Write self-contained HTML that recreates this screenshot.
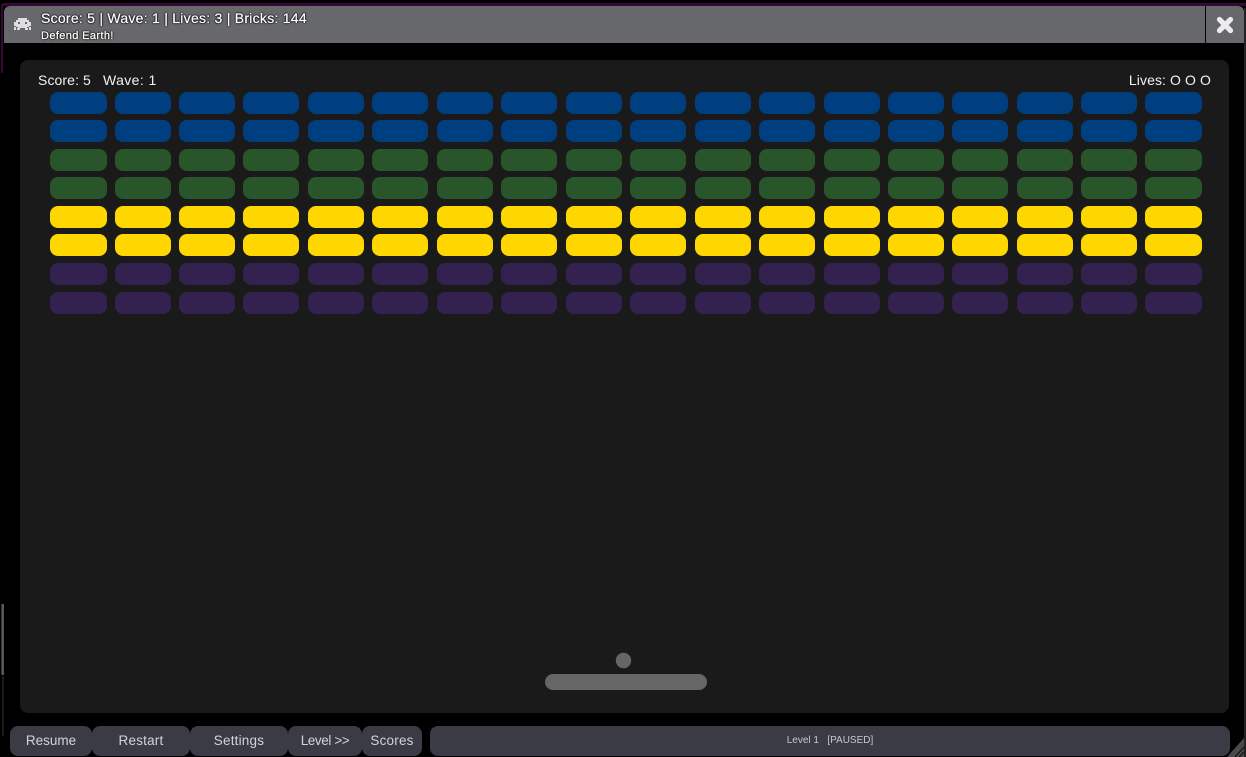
<!DOCTYPE html>
<html>
<head>
<meta charset="utf-8">
<style>
html,body{margin:0;padding:0;background:#000;}
body{position:relative;width:1246px;height:757px;overflow:hidden;font-family:"Liberation Sans",sans-serif;color:#fff;}
.abs{position:absolute;}
.t{position:absolute;white-space:nowrap;line-height:1;}
.btn{position:absolute;top:726px;height:30px;background:#3a3b44;border-radius:8px;color:#d4d4d6;font-size:13.5px;line-height:29px;text-align:center;letter-spacing:.2px;}
.sh{text-shadow:-1px 0 1px #222,1px 0 1px #222,0 -1px 1px #222,0 1px 1px #222;-webkit-text-stroke:.2px #fff;}
.s{font-size:14px;color:#f2f2f2;top:73px;letter-spacing:.1px;}
</style>
</head>
<body>
<div class="abs" style="left:3px;top:3px;width:1243px;height:3px;background:#360935;"></div>
<div class="abs" style="left:1px;top:4px;width:2px;height:69px;background:#360935;"></div>
<div class="abs" style="left:1px;top:604px;width:3px;height:71px;background:linear-gradient(90deg,#222,#666 60%,#444);"></div>
<div class="abs" style="left:2px;top:676px;width:2px;height:60px;background:#1c1c1c;"></div>
<div class="abs" style="left:1244px;top:8px;width:2px;height:749px;background:#222;"></div>

<div class="abs" style="left:4px;top:6px;width:1240px;height:37px;background:#67686c;border-radius:6px 6px 0 0;"></div>
<div class="abs" style="left:1205px;top:6px;width:1px;height:37px;background:#000;"></div>

<svg class="abs" style="left:14px;top:18px;" width="17" height="13" viewBox="0 0 17 13" fill="#dedede">
<rect x="4" y="0" width="9" height="2"/>
<rect x="2" y="2" width="13" height="2"/>
<rect x="0" y="4" width="4" height="4"/><rect x="6" y="4" width="5" height="4"/><rect x="13" y="4" width="4" height="4"/>
<rect x="2" y="6" width="13" height="3"/>
<rect x="0" y="9" width="2" height="3"/><rect x="15" y="9" width="2" height="3"/>
<rect x="4" y="9" width="9" height="1"/>
<rect x="3" y="10" width="3" height="2"/><rect x="11" y="10" width="3" height="2"/>
</svg>

<div class="t sh" style="left:41px;top:11px;font-size:14px;letter-spacing:.26px;">Score: 5 | Wave: 1 | Lives: 3 | Bricks: 144</div>
<div class="t sh" style="left:41px;top:31px;font-size:11px;letter-spacing:.38px;">Defend Earth!</div>

<svg class="abs" style="left:1215px;top:14.5px;" width="20" height="20" viewBox="0 0 20 20">
<path d="M4.5 4.5L15.5 15.5M15.5 4.5L4.5 15.5" stroke="#ececec" stroke-width="5.2" stroke-linecap="round"/>
</svg>

<div class="abs" style="left:20px;top:60px;width:1209px;height:653px;background:#1a1a1a;border-radius:8px;"></div>
<div class="t s" style="left:38px;">Score: 5</div>
<div class="t s" style="left:103px;letter-spacing:.4px;">Wave: 1</div>
<div class="t s" style="right:35px;">Lives: O O O</div>

<svg class="abs" style="left:0;top:0;" width="1246" height="757" viewBox="0 0 1246 757">
<defs>
<g id="r">
<rect x="50" width="57" height="22" rx="8"/><rect x="115" width="56" height="22" rx="8"/><rect x="179" width="56" height="22" rx="8"/><rect x="243" width="56" height="22" rx="8"/><rect x="308" width="56" height="22" rx="8"/><rect x="372" width="56" height="22" rx="8"/><rect x="437" width="56" height="22" rx="8"/><rect x="501" width="56" height="22" rx="8"/><rect x="566" width="56" height="22" rx="8"/><rect x="630" width="56" height="22" rx="8"/><rect x="695" width="56" height="22" rx="8"/><rect x="759" width="56" height="22" rx="8"/><rect x="824" width="56" height="22" rx="8"/><rect x="888" width="56" height="22" rx="8"/><rect x="952" width="56" height="22" rx="8"/><rect x="1017" width="56" height="22" rx="8"/><rect x="1081" width="56" height="22" rx="8"/><rect x="1145" width="57" height="22" rx="8"/>
</g>
</defs>
<use href="#r" y="92" fill="#003f7f"/>
<use href="#r" y="120" fill="#003f7f"/>
<use href="#r" y="149" fill="#28552a"/>
<use href="#r" y="177" fill="#28552a"/>
<use href="#r" y="206" fill="#ffd700"/>
<use href="#r" y="234" fill="#ffd700"/>
<use href="#r" y="263" fill="#332250"/>
<use href="#r" y="292" fill="#332250"/>
<circle cx="623.5" cy="660.5" r="7.7" fill="#666"/>
<rect x="545" y="674" width="162" height="16" rx="8" fill="#666"/>
<path d="M1227 757L1244 738V757Z" fill="#4a4a4a"/>
<path d="M1235 757L1244 747M1239 757L1244 752" stroke="#111" stroke-width="1.2"/>
</svg>

<div class="btn" style="left:10px;width:82px;letter-spacing:0;">Resume</div>
<div class="btn" style="left:92px;width:98px;">Restart</div>
<div class="btn" style="left:190px;width:98px;">Settings</div>
<div class="btn" style="left:288px;width:74px;letter-spacing:-.4px;">Level &gt;&gt;</div>
<div class="btn" style="left:362px;width:60px;">Scores</div>
<div class="btn" style="left:430px;width:800px;font-size:10px;line-height:30px;color:#c8c8ca;letter-spacing:0;white-space:pre;">Level 1   [PAUSED]</div>
</body>
</html>
